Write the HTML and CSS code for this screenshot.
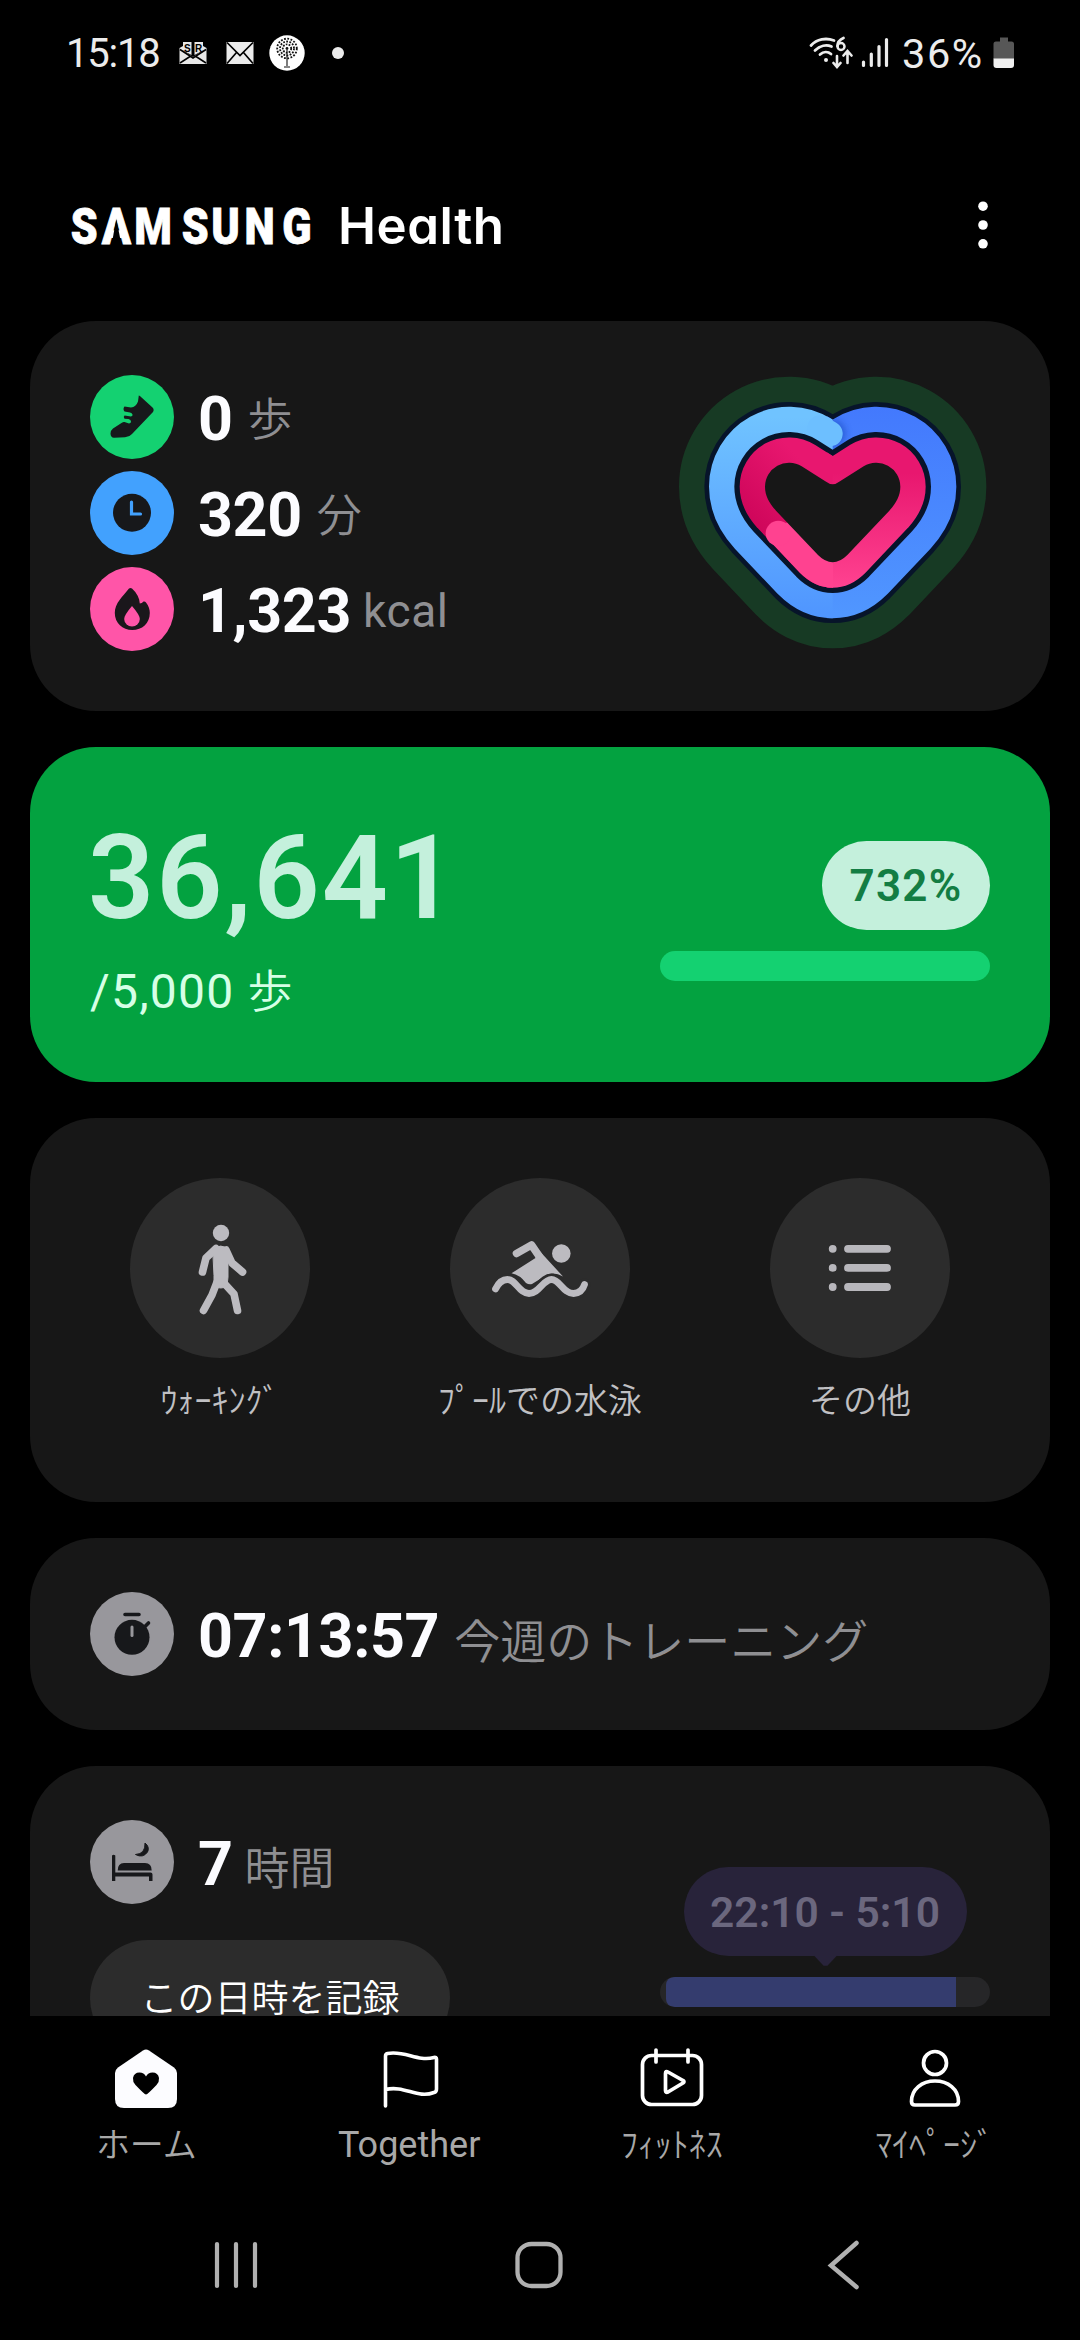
FILE: index.html
```html
<!DOCTYPE html>
<html lang="ja">
<head>
<meta charset="utf-8">
<title>Samsung Health</title>
<link rel="stylesheet" href="styles.css">
</head>
<body>
<div class="status">
  <div class="status-left">
    <span class="time">15:18</span>
    <svg class="ic-mail" width="28" height="24" viewBox="0 0 28 24"><path d="M0.500 7L4 5v4.500L14 16 24 9.500V5l3.500 2v16H0.500z" fill="#e8e8e8"/><path d="M4 1h8.500v13L4 9.500zM15.500 1H24v8.500L15.500 14z" fill="#e8e8e8"/><path d="M1 22L11 15.500M27 22L17 15.500M1 8.500L14 17 27 8.500" stroke="#000" stroke-width="1.500" fill="none"/><text x="5" y="10.500" class="mini">S</text><text x="16" y="10.500" class="mini">R</text></svg>
    <svg class="ic-mail2" width="28" height="24" viewBox="0 0 28 24"><rect x="0.500" y="1" width="27" height="22" fill="#ececec"/><path d="M1 1.500L14 14.500 27 1.500M1 22.500L10.500 11.500M27 22.500L17.500 11.500" stroke="#000" stroke-width="1.700" fill="none"/></svg>
    <svg class="ic-tree" width="36" height="36" viewBox="0 0 36 36"><circle cx="18" cy="18" r="17.700" fill="#fff"/><circle cx="18" cy="13.500" r="9.800" fill="none" stroke="#111" stroke-width="1.800" stroke-dasharray="1.800 1.500"/><circle cx="18" cy="13.500" r="7" fill="none" stroke="#111" stroke-width="1.800" stroke-dasharray="1.800 1.400"/><circle cx="18" cy="13.500" r="4.200" fill="none" stroke="#111" stroke-width="1.800" stroke-dasharray="1.700 1.300"/><circle cx="18" cy="13.500" r="1.400" fill="#111"/><path d="M18 15v16M15 32h6" stroke="#111" stroke-width="1.100"/></svg>
    <i class="dot"></i>
  </div>
  <div class="status-right">
    <svg width="44" height="34" viewBox="0 0 44 34"><g fill="none" stroke="#ececec" stroke-width="2.800" stroke-linecap="round"><path d="M2 9.500C8 3 17 1.500 25 4.500"/><path d="M6 14.500C11 9.500 17.500 8.500 22.500 10.500"/><path d="M11 18.500C14.500 15.500 19 15.500 22 18"/><path d="M34.500 2C30 4 28.500 7.500 28.500 10"/><circle cx="32" cy="10.500" r="3.500" stroke-width="2.500"/><path d="M28 20v10M24.500 27l3.500 4 3.500-4M38.500 27V16M34.500 19.500l4-4.500 4 4.500" stroke-width="2.600"/></g><circle cx="17" cy="24" r="2" fill="#ececec"/></svg>
    <svg class="ic-sig" width="28" height="32" viewBox="0 0 28 32"><g stroke="#ececec" stroke-width="3.200" stroke-linecap="round"><path d="M2.500 25v3.500M10.300 17v11.500M18 9.500v19M25.500 2.500v26"/></g></svg>
    <span class="batt-text">36%</span>
    <svg class="ic-batt" width="22" height="32" viewBox="0 0 22 32"><path d="M7 0.500h8v4h3.500q2.500 0 2.500 2.500V22H0.500V7q0-2.500 2.500-2.500h4z" fill="#575757"/><path d="M0.500 21.500H21v6.500q0 3-3 3H3.500q-3 0-3-3z" fill="#f0f0f0"/></svg>
  </div>
</div>

<header class="header">
  <svg class="logo" width="440" height="60" viewBox="0 195 440 60">
    <g transform="scale(.86 1)"><text class="wordmark" y="244" x="5.500 41.500 79.500 134.500 169 207.500 251.500">SAMSUNG</text></g>
    <path d="M50.300 219L45.500 245h10z" fill="#000"/>
    <text class="product" y="244" x="272" textLength="166">Health</text>
  </svg>
  <svg class="more" width="12" height="50" viewBox="0 0 12 50"><g fill="#fff"><circle cx="6" cy="6.200" r="4.800"/><circle cx="6" cy="25" r="4.800"/><circle cx="6" cy="43.800" r="4.800"/></g></svg>
</header>

<main class="feed">
  <section class="card activity">
    <div class="metrics">
      <div class="metric">
        <svg width="84" height="84" viewBox="0 0 84 84"><circle cx="42" cy="42" r="42" fill="#14d171"/><path d="M48.800 20.500Q50 20.500 51 22L62.500 32.500Q64.500 34.500 63 37L42 59Q39.500 62 35 62.300L24 62.800Q20.500 62.500 20.500 58.500Q20.500 55.500 23 53.500L31.500 48Q33.500 46.500 34.500 47L39 48.500Q41 48.500 41 46.500T38.500 44L34.500 43.800Q33 42 34.500 40.500L41 41.500Q43 41.200 42.500 39.500T40 37.500L34.500 36.500Q32.500 34 34.500 31.500L41 32.500Q46 32 48 26.500z" fill="#17181b"/></svg>
        <b class="value">0</b><span class="unit">歩</span>
      </div>
      <div class="metric">
        <svg width="84" height="84" viewBox="0 0 84 84"><circle cx="42" cy="42" r="42" fill="#42a1fe"/><circle cx="42" cy="41.800" r="19" fill="#17181b"/><path d="M41.500 31v12h9" fill="none" stroke="#42a1fe" stroke-width="3.200" stroke-linecap="round"/></svg>
        <b class="value">320</b><span class="unit">分</span>
      </div>
      <div class="metric">
        <svg width="84" height="84" viewBox="0 0 84 84"><circle cx="42" cy="42" r="42" fill="#ff55a8"/><path d="M39 21.500Q40.500 20.500 42 21.500C47 26 49.500 31 49.800 36.500Q52 36.500 53.500 34.500Q55 34 56 35.500C59 39.500 59.800 42.500 59.800 46C59.800 56.500 52 63 42.300 63S24.800 56 24.800 46C24.800 36 32.500 30 39 21.500z" fill="#1a171b"/><path d="M42 39Q49.800 48 49.800 52A7.800 7.500 0 0 1 34.200 52Q34.200 48 42 39z" fill="#ff55a8"/></svg>
        <b class="value">1,323</b><span class="unit unit-latin">kcal</span>
      </div>
    </div>
    <svg class="heart" width="314" height="280" viewBox="108 96 942 840">
      <defs>
        <path id="h" d="M578 433Q568 433 556 424L485 379A72 72 0 0 0 375 440C375 468 389 491 408 512L534 645Q556 667 578 667T622 645L748 512C767 491 781 468 781 440A72 72 0 0 0 671 379L600 424Q588 433 578 433z"/>
        <linearGradient id="bl" gradientUnits="userSpaceOnUse" x1="0" y1="230" x2="0" y2="820"><stop offset="0" stop-color="#70c3ff"/><stop offset="1" stop-color="#5096ff"/></linearGradient>
        <linearGradient id="br" gradientUnits="userSpaceOnUse" x1="0" y1="200" x2="0" y2="820"><stop offset="0" stop-color="#4379fd"/><stop offset="1" stop-color="#5096ff"/></linearGradient>
        <linearGradient id="pr" gradientUnits="userSpaceOnUse" x1="0" y1="400" x2="0" y2="743"><stop offset="0" stop-color="#e8176f"/><stop offset="1" stop-color="#ff4290"/></linearGradient>
        <linearGradient id="pl" gradientUnits="userSpaceOnUse" x1="330" y1="580" x2="520" y2="400"><stop offset="0" stop-color="#cc0458"/><stop offset="1" stop-color="#e8176f"/></linearGradient>
        <clipPath id="cl"><rect x="100" y="90" width="478" height="860"/></clipPath>
        <clipPath id="cr"><rect x="560" y="90" width="497" height="860"/></clipPath>
        <clipPath id="ct"><path d="M350 638L460 528 579 640V780H350z"/></clipPath>
        <filter id="s" x="-50%" y="-50%" width="200%" height="200%"><feGaussianBlur stdDeviation="9"/></filter>
        <clipPath id="cs"><path d="M578 241Q640 200 711 200V292Q640 292 578 335z"/></clipPath>
      </defs>
      <g fill="none" stroke-linejoin="round">
        <use href="#h" stroke="#173a24" stroke-width="516"/>
        <use href="#h" stroke="#07142a" stroke-width="364"/>
        <use href="#h" stroke="url(#br)" stroke-width="336" clip-path="url(#cr)"/>
        <use href="#h" stroke="url(#bl)" stroke-width="336" clip-path="url(#cl)"/>
        <g clip-path="url(#cs)"><circle cx="576" cy="280" r="42" fill="#1c4fc4" opacity=".6" filter="url(#s)"/></g>
        <path d="M540 264L570 281" stroke="#6dbfff" stroke-width="76" stroke-linecap="round"/>
        <use href="#h" stroke="#07142a" stroke-width="184"/>
        <use href="#h" stroke="url(#pr)" stroke-width="152" clip-path="url(#cr)"/>
        <use href="#h" stroke="url(#pl)" stroke-width="152" clip-path="url(#cl)"/>
        <use href="#h" stroke="#ff4290" stroke-width="152" clip-path="url(#ct)"/>
        <circle cx="415" cy="580" r="38" fill="#ff4290"/>
      </g>
      <use href="#h" fill="#171717"/>
    </svg>
  </section>

  <section class="card steps">
    <div class="steps-text">
      <div class="steps-count">36,641</div>
      <div class="steps-goal">/5,000 <span class="goal-unit">歩</span></div>
    </div>
    <div class="steps-progress">
      <span class="percent">732%</span>
      <div class="bar"></div>
    </div>
  </section>

  <section class="card shortcuts">
    <div class="shortcut">
      <svg width="180" height="180" viewBox="0 0 180 180"><circle cx="90" cy="90" r="90" fill="#2c2c2c"/><g fill="#bcbbc0" stroke="#bcbbc0" stroke-linecap="round" stroke-linejoin="round"><circle cx="91" cy="55" r="8.200" stroke="none"/><path d="M83 72Q91 64 98 72V99L97 108Q91 112 84 108V98z" stroke-width="1"/><path d="M86 70.500L76 80 72.500 94M96 72L102 85 112.500 94M87 104L82 117 73.500 132.500M93 104L104 116 107.500 132.500" fill="none" stroke-width="7.600"/></g></svg>
      <span class="label">ｳｫｰｷﾝｸﾞ</span>
    </div>
    <div class="shortcut">
      <svg width="180" height="180" viewBox="0 0 180 180"><circle cx="90" cy="90" r="90" fill="#2c2c2c"/><g fill="none" stroke="#bcbbc0" stroke-linecap="round" stroke-linejoin="round"><path d="M66.500 75.500L81.500 67 89 78" stroke-width="7.600"/><path d="M85 68L113 98.500Q103 93 95 98L82 106Q79 107 76 105Q70 97 61.500 95.300L85.500 80z" fill="#bcbbc0" stroke="none"/><circle cx="111.300" cy="75.500" r="9.300" fill="#bcbbc0" stroke="none"/><path d="M45.500 111Q50 101.500 57.500 101.500C66 101.500 69 115.500 79 115.500S93 101.500 101.500 101.500C110 101.500 113 115.500 123.500 115.500Q132 115 134.500 106.500" stroke="#2c2c2c" stroke-width="12"/><path d="M45.500 111Q50 101.500 57.500 101.500C66 101.500 69 115.500 79 115.500S93 101.500 101.500 101.500C110 101.500 113 115.500 123.500 115.500Q132 115 134.500 106.500" stroke-width="6.800"/></g></svg>
      <span class="label">ﾌﾟｰﾙでの水泳</span>
    </div>
    <div class="shortcut">
      <svg width="180" height="180" viewBox="0 0 180 180"><circle cx="90" cy="90" r="90" fill="#2c2c2c"/><g stroke="#b8b7bc" stroke-width="7.800" stroke-linecap="round"><path d="M62.700 70.800h.01M62.700 89.900h.01M62.700 109h.01M78 70.800h39M78 89.900h39M78 109h39"/></g></svg>
      <span class="label">その他</span>
    </div>
  </section>

  <section class="card training">
    <div class="metric">
      <svg width="84" height="84" viewBox="0 0 84 84"><circle cx="42" cy="42" r="42" fill="#98979c"/><circle cx="42" cy="45.300" r="17.500" fill="#17181b"/><path d="M35 22.500h14M55 34.500l3.500-3.500" stroke="#17181b" stroke-width="3.600" stroke-linecap="round"/><path d="M42 35v8.500" stroke="#98979c" stroke-width="3" stroke-linecap="round"/></svg>
      <b class="value">07:13:57</b><span class="unit unit-low">今週のトレーニング</span>
    </div>
  </section>

  <section class="card sleep">
    <div class="sleep-main">
      <div class="metric">
        <svg width="84" height="84" viewBox="0 0 84 84"><circle cx="42" cy="42" r="42" fill="#98979c"/><path d="M22 35.500q1.600-1.500 3.300 0V52.500H60.500q2 0 2 2V61h-3.500v-4.500H25.300V61H22zM27.700 50.500Q27.700 43 34 43H55Q61.700 43 61.700 50.500z" fill="#17181b"/><path d="M55 23Q60 27 57.500 32Q53 38.500 45.500 34.500Q55.500 34 55 23z" fill="#17181b" stroke="#17181b" stroke-linejoin="round"/></svg>
        <b class="value">7</b><span class="unit unit-hours">時間</span>
      </div>
      <button class="log">この日時を記録</button>
    </div>
    <div class="sleep-chart">
      <div class="tip">22:10 - 5:10</div>
      <div class="track"><div class="fill"></div></div>
    </div>
  </section>
</main>

<nav class="tabs">
  <a class="tab"><svg width="66" height="66" viewBox="0 0 66 66"><path d="M30 4.500Q33 2.500 36 4.500L61 21.500Q64 24 64 27V53Q64 62 55 62H11Q2 62 2 53V27Q2 24 5 21.500z" fill="#fcfcff"/><path d="M33 48.500Q31.500 48.500 22.500 39Q19.500 35.500 20 32Q21 26.500 26.500 26.500Q31 26.500 33 30.500Q35 26.500 39.500 26.500Q45 26.500 46 32Q46.500 35.500 43.500 39Q34.500 48.500 33 48.500z" fill="#000"/></svg><span>ホーム</span></a>
  <a class="tab"><svg width="66" height="66" viewBox="-2 0 66 66"><path d="M7.500 60V10Q7.500 8 9.500 7.500C27 4 39 16 56 11.500Q58.500 11 58.500 13V43Q58.500 46 56 46.500C39 53 27 39 7.500 43.500" fill="none" stroke="#fff" stroke-width="3.600" stroke-linecap="round" stroke-linejoin="round"/></svg><span class="latin">Together</span></a>
  <a class="tab"><svg width="66" height="66" viewBox="0 0 66 66"><g fill="none" stroke="#fff" stroke-width="3.700" stroke-linecap="round" stroke-linejoin="round"><rect x="3.500" y="9.500" width="59" height="49" rx="9"/><path d="M26.500 27.500Q26.500 24.500 29 26L44 34.500Q46 35.500 44 37L29 46Q26.500 47 26.500 44.500z"/><path d="M17 4v12M49 4v12"/></g></svg><span>ﾌｨｯﾄﾈｽ</span></a>
  <a class="tab"><svg width="66" height="66" viewBox="0 0 66 66"><g fill="none" stroke="#fff" stroke-width="3.700" stroke-linejoin="round"><circle cx="33" cy="17" r="11.500"/><path d="M9.500 55.500C9.500 43 20 35 33 35S56.500 43 56.500 55.500Q56.500 59 53 59H13Q9.500 59 9.500 55.500z"/></g></svg><span class="mypage">ﾏｲﾍﾟｰｼﾞ</span></a>
</nav>

<div class="sysnav">
  <svg width="52" height="52" viewBox="0 0 52 52"><path d="M7 5v42M26 5v42M45 5v42" stroke="#b0b0b0" stroke-width="4.200" stroke-linecap="round"/></svg>
  <svg width="52" height="52" viewBox="1 0 52 52"><rect x="4.500" y="5" width="43" height="42" rx="14" fill="none" stroke="#b0b0b0" stroke-width="4.300"/></svg>
  <svg width="52" height="52" viewBox="0 0 52 52"><path d="M38.500 4L13 26.500 38.500 48" fill="none" stroke="#b0b0b0" stroke-width="4.500" stroke-linecap="round"/></svg>
</div>
</body>
</html>
```
FILE: styles.css
```css
* { box-sizing: border-box; }
body {
  margin: 0;
  width: 1080px;
  height: 2340px;
  overflow: hidden;
  background: #000;
  color: #fff;
  font-family: Roboto, "Noto Sans CJK JP", sans-serif;
  display: flex;
  flex-direction: column;
}
svg { display: block; flex: none; }

.status {
  height: 106px;
  padding: 0 65px 0 66px;
  display: flex;
  justify-content: space-between;
  align-items: center;
  color: #ececec;
}
.status-left, .status-right { display: flex; align-items: center; }
.time, .batt-text { font-size: 40px; line-height: 54px; padding-top: 2px; white-space: nowrap; }
.time { width: 113px; letter-spacing: -1.2px; }
.ic-mail2 { margin-left: 19px; }
.ic-tree { margin-left: 15px; }
.dot { width: 12px; height: 12px; border-radius: 50%; background: #ececec; margin-left: 27px; }
.mini { font: 700 10px "Liberation Sans", sans-serif; fill: #000; }
.ic-sig { margin: 0 13px 0 8px; }
.batt-text { width: 91px; font-size: 41.5px; letter-spacing: 1.6px; }

.header {
  height: 215px;
  padding: 23px 91px 0 66px;
  display: flex;
  justify-content: space-between;
  align-items: center;
}
.wordmark { font: 900 50px Roboto, sans-serif; fill: #fff; stroke: #fff; stroke-width: 0.8px; }
.product { font: 600 51px Inter, sans-serif; font-feature-settings: "cv11"; fill: #fff; }

.feed {
  height: 1695px;
  padding: 0 30px;
  overflow: hidden;
  display: flex;
  flex-direction: column;
  gap: 36px;
}
.card { flex: none; border-radius: 66px; background: #171717; }

.metric { display: flex; align-items: center; height: 84px; }
.value { font-weight: 700; font-size: 61px; line-height: 84px; padding-top: 4px; margin-left: 24px; color: #fcfcff; white-space: nowrap; letter-spacing: -0.4px; }
.unit { font-size: 45px; line-height: 60px; padding-top: 8px; margin-left: 15px; color: #8f8f92; font-weight: 350; white-space: nowrap; }
.unit-latin { font-size: 46px; font-weight: 400; padding-top: 4px; margin-left: 12px; letter-spacing: 0.6px; }
.unit-low { padding-top: 16px; font-size: 46px; }
.unit-hours { padding-top: 16px; margin-left: 12px; }

.activity {
  height: 390px;
  padding: 54px 60px 0;
  display: flex;
  justify-content: space-between;
}
.metrics { display: flex; flex-direction: column; gap: 12px; }
.heart { margin-top: -3px; }

.steps {
  height: 335px;
  padding: 61px 60px 0;
  background: #03a240;
  display: flex;
  justify-content: space-between;
}
.steps-count { font-size: 116px; line-height: 140px; font-weight: 600; color: #c4f0dc; margin-left: -2px; letter-spacing: 1.9px; }
.steps-goal { font-size: 48px; line-height: 60px; margin-top: 14px; color: #d6ffe6; letter-spacing: 1.2px; }
.goal-unit { font-size: 45px; font-weight: 350; }
.steps-progress { width: 330px; padding-top: 33px; display: flex; flex-direction: column; align-items: flex-end; gap: 21px; }
.percent {
  width: 168px; height: 89px; border-radius: 45px;
  background: #c4f0dc; color: #137d43;
  font-size: 44px; font-weight: 600; line-height: 91px; text-align: center; letter-spacing: 1.3px;
}
.bar { width: 330px; height: 30px; border-radius: 15px; background: #14d171; }

.shortcuts {
  height: 384px;
  padding: 60px 30px 0;
  display: grid;
  grid-template-columns: repeat(3, 1fr);
}
.shortcut { display: flex; flex-direction: column; align-items: center; }
.label { font-size: 34px; line-height: 48px; margin-top: 19px; color: #c0c0c3; white-space: nowrap; font-weight: 350; }

.training { height: 192px; padding: 54px 60px; }

.sleep { height: 400px; padding: 54px 60px; display: flex; justify-content: space-between; }
.log {
  display: block; margin: 36px 0 0; padding: 0 0 4px; border: 0;
  width: 360px; height: 116px; border-radius: 58px;
  background: #2c2c2c; color: #fff;
  font: 350 37px/110px "Noto Sans CJK JP", sans-serif;
}
.sleep-chart { width: 330px; padding-top: 47px; display: flex; flex-direction: column; align-items: center; gap: 21px; }
.tip {
  position: relative;
  width: 283px; height: 89px; border-radius: 45px;
  background: #28233a; color: #6b677e;
  font-size: 42.5px; font-weight: 600; line-height: 91px; text-align: center; white-space: nowrap;
}
.tip::after {
  content: ""; position: absolute; left: 130px; top: 88px;
  width: 24px; height: 12px; background: #28233a;
  clip-path: polygon(0 0, 100% 0, 58% 90%, 42% 90%);
}
.track { width: 330px; height: 30px; border-radius: 15px; background: #262628; overflow: hidden; padding-left: 6px; }
.fill { width: 290px; height: 30px; border-radius: 8px 0 0 8px; background: #343c6e; }

.tabs {
  height: 174px;
  padding: 30px 14px 0 15px;
  display: grid;
  grid-template-columns: repeat(4, 1fr);
}
.tab { display: flex; flex-direction: column; align-items: center; color: #a8a8a8; font-size: 34px; font-weight: 350; white-space: nowrap; }
.tab span { line-height: 48px; margin-top: 9px; }
.tab .latin { font-size: 36px; font-weight: 400; }

.sysnav { height: 150px; padding: 0 210px 0 210px; display: flex; justify-content: space-between; align-items: center; }
```
